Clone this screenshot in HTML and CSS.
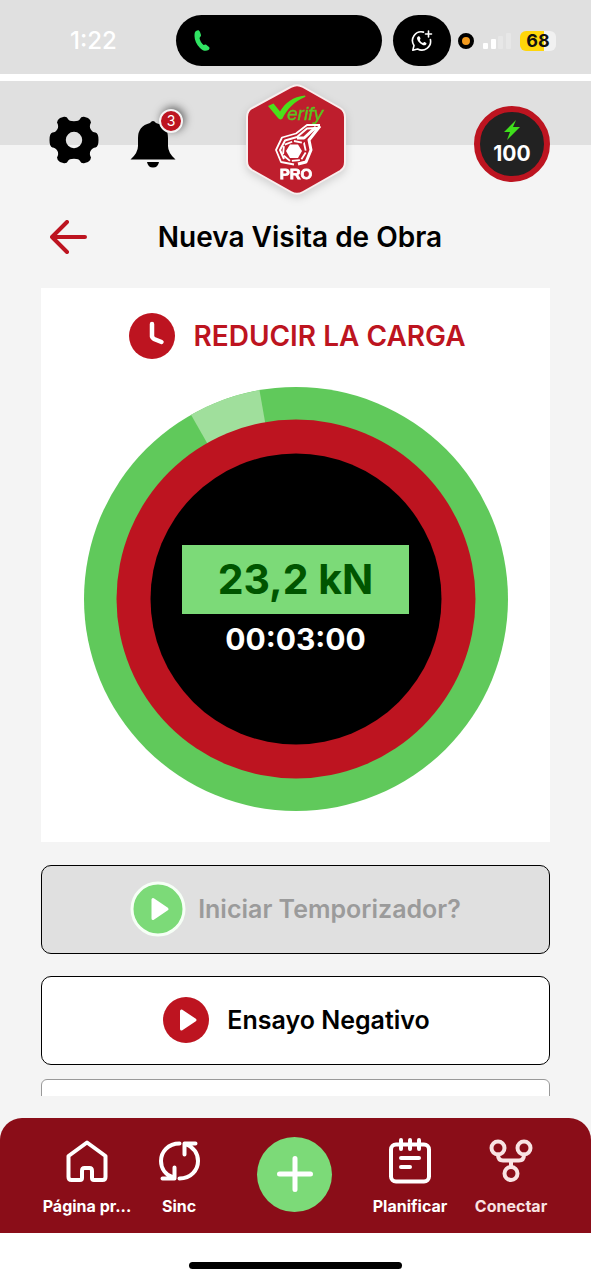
FILE: index.html
```html
<!DOCTYPE html>
<html lang="es">
<head>
<meta charset="utf-8">
<meta name="viewport" content="width=device-width, initial-scale=1">
<title>Nueva Visita de Obra</title>
<link rel="stylesheet" href="styles.css">
</head>
<body>
<div class="status">
  <span class="status-time">1:22</span>
  <span class="island">
    <svg width="16" height="22" viewBox="0 0 16 22" fill="#30e463"><path d="M2 1C4 0 5 0 6 2L7 5C7.300 6 6 7 5.500 8C6 11 7.500 13 9.500 15C10.500 15 11.500 14 12.500 15L15 17C16 18 15.500 19 14.500 20C12 21.500 9 21 6 18C2.500 14.500 .5 10 .5 6C.5 3.500 .8 1.800 2 1Z"/></svg>
  </span>
  <span class="call-pill">
    <svg width="22" height="22" viewBox="0 0 22 22" fill="none" stroke="#fff" stroke-width="1.600" stroke-linecap="round" stroke-linejoin="round"><path d="M12.500 2.100A8.800 8.800 0 0 0 3 15.500L1.800 20.200L6.600 19A8.800 8.800 0 0 0 19.400 9.500"/><path d="M17.500 1V7M14.500 4H20.500"/><path d="M7 6.500C8 5.800 8.600 6.200 9 7.200L9.500 8.500C9.600 9 9 9.500 8.800 10C9.500 11.500 10.500 12.500 12 13C12.700 12.600 13 11.900 13.600 12.100L15.300 13C15.800 13.500 15.200 14.800 14.200 15.200C11 16 6 11 6 8.200C6 7.500 6.400 6.900 7 6.500Z" fill="#fff" stroke="none"/></svg>
  </span>
  <span class="mic-dot"></span>
  <svg class="signal" width="28" height="18" viewBox="0 0 28 18"><rect y="11" width="5" height="6" rx="1" fill="#fff"/><rect x="8" y="7" width="5" height="10" rx="1" fill="#fff"/><rect x="15" y="4" width="5" height="13" rx="1" fill="#e7e7e7"/><rect x="23" y="1" width="5" height="16" rx="1" fill="#e7e7e7"/></svg>
  <span class="battery">68</span>
</div>

<header class="header">
  <div class="header-actions">
    <button class="icon-button" aria-label="Ajustes">
      <svg width="50" height="48" viewBox="0 0 50 48"><path fill="#000" fill-rule="evenodd" d="M11 2L15 .8Q18 .5 19 3Q20 5.200 25 5.200Q30 5.200 31 3Q32 .5 35 .8L39 2Q42 4 42 6.500Q40 10 41.500 13Q43.500 16.500 46.500 16.500Q49.500 17 49.500 24Q49.500 31 46.500 31.500Q43.500 31.500 41.500 35Q40 38 42 41.500Q42 44 39 46L35 47.200Q32 47.500 31 45Q30 42.800 25 42.800Q20 42.800 19 45Q18 47.500 15 47.200L11 46Q8 44 8 41.500Q10 38 8.500 35Q6.500 31.500 3.500 31.500Q.5 31 .5 24Q.5 17 3.500 16.500Q6.500 16.500 8.500 13Q10 10 8 6.500Q8 4 11 2ZM25 15.800A8.200 8.200 0 1 0 25 32.200A8.200 8.200 0 1 0 25 15.800Z"/></svg>
    </button>
    <button class="icon-button bell" aria-label="Notificaciones">
      <svg width="46" height="48" viewBox="0 0 46 48" fill="#000"><path d="M20 3Q23-1 26 3Q38 6 38 18V26Q38 33 45.500 39.500H.5Q8 33 8 26V18Q8 6 20 3ZM17 42H29Q28 47.500 23 47.500Q18 47.500 17 42Z"/></svg>
      <span class="badge">3</span>
    </button>
  </div>
  <svg class="logo" width="102" height="114" viewBox="9 8 102 114" role="img" aria-label="Verify PRO">
    <path d="M55 12Q61 8.500 67 12L104 33Q109 36 109 42V87Q109 93 104 96L67 117Q61 120.500 55 117L16 95Q11 92 11 86V42Q11 36 16 33Z" fill="#be1e2d" stroke="#f8eeee" stroke-width="2"/>
    <path d="M32 31L37.500 28.500L44 36.500C49 28 57 21.500 69 20.500Q70 21 69 22C59 26 51 34 46.500 43.500Q44 45.500 42 43Z" fill="#4be01a"/>
    <text x="51" y="45" class="logo-verify">erify</text>
    <g fill="none" stroke="#fff" stroke-linejoin="round">
      <path stroke-width="1.800" d="M84 50L71 50L60 58.500L46 62.500L40 75L45 87L58 89.500"/>
      <path stroke-width="2" d="M81 53L71 53.500L61 62L49 65.500L44 75L48 84"/>
      <path stroke-width="3" d="M84 51L73 65L75 75L70 87L62 89M80 52L68 63L61 63"/>
      <path stroke-width="1.800" stroke-dasharray="8 2" d="M58 66L68 68L70 77L65 85L54 86L47 80L48 70Z"/>
    </g>
    <path d="M54 69.500L62 69.500L66 76L62 83L54 83L50 76Z" fill="#fff"/>
    <text x="60" y="104" text-anchor="middle" class="logo-pro">PRO</text>
  </svg>
  <div class="charge">
    <svg width="16" height="20" viewBox="0 0 16 20"><path d="M12 0L0 12H6L3 20L16 7H9Z" fill="#3fe01c"/></svg>
    <span>100</span>
  </div>
</header>

<div class="title-row">
  <button class="icon-button back" aria-label="Volver">
    <svg width="38" height="34" viewBox="0 0 38 34" fill="none" stroke="#bd1420" stroke-width="4" stroke-linecap="round" stroke-linejoin="round"><path d="M17 2L2 17L17 32M2 17H35"/></svg>
  </button>
  <h1>Nueva Visita de Obra</h1>
</div>

<main class="content">
  <section class="card">
    <div class="card-head">
      <svg width="46" height="46" viewBox="0 0 46 46"><circle cx="23" cy="23" r="23" fill="#bd1420"/><path d="M23 11V23.500Q23.500 25 25 26L32.500 29" fill="none" stroke="#fff" stroke-width="4.500" stroke-linecap="round" stroke-linejoin="round"/></svg>
      <h2>REDUCIR LA CARGA</h2>
    </div>
    <div class="gauge">
      <svg class="gauge-rings" viewBox="-212 -212 424 424">
        <circle r="212" fill="#60c95b"/>
        <path d="M0 0L-105 -184.200A212 212 0 0 1 -36.500 -208.800Z" fill="#a0df9c"/>
        <circle r="179.500" fill="#bd1420"/>
        <circle r="145.500" fill="#000"/>
      </svg>
      <div class="readout">
        <div class="force">23,2 kN</div>
        <div class="timer">00:03:00</div>
      </div>
    </div>
  </section>

  <button class="action" disabled>
    <svg width="56" height="56" viewBox="0 0 56 56"><circle cx="28" cy="28" r="26" fill="#7cda78" stroke="#f6fff6" stroke-width="3"/><path d="M23 18.500V37.500L37 28Z" fill="#fff" stroke="#fff" stroke-width="3" stroke-linejoin="round"/></svg>
    <span>Iniciar Temporizador?</span>
  </button>
  <button class="action action-negative">
    <svg width="46" height="46" viewBox="0 0 46 46"><circle cx="23" cy="23" r="23" fill="#bd1420"/><path d="M18.500 14V32L32 23Z" fill="#fff" stroke="#fff" stroke-width="3" stroke-linejoin="round"/></svg>
    <span>Ensayo Negativo</span>
  </button>
  <div class="next-panel"></div>
</main>

<nav class="tabs">
  <a class="tab" href="#">
    <svg width="46" height="46" viewBox="0 0 46 46"><path d="M23 4.500L41.500 18V39Q41.500 42 38.500 42H30Q28 42 28 40V33Q28 30 25.500 30H20.500Q18 30 18 33V40Q18 42 16 42H7.500Q4.500 42 4.500 39V18Z"/></svg>
    <span>Página pr...</span>
  </a>
  <a class="tab" href="#">
    <svg width="46" height="46" viewBox="0 0 46 46"><path d="M23.500 5.500C12 5.500 5 14 5 23C5 31 10 37 17 39.500M6.500 40.500H18.500V29.500M23.500 40.500C35 40.500 42 32 42 23C42 15 37 9 29 5.500M39.500 5.500H28.500V16.500"/></svg>
    <span>Sinc</span>
  </a>
  <button class="add" aria-label="Añadir">
    <svg width="36" height="36" viewBox="0 0 36 36" stroke="#fff" stroke-width="5" stroke-linecap="round"><path d="M18 2.500V33.500M2.500 18H33.500"/></svg>
  </button>
  <a class="tab" href="#">
    <svg width="46" height="46" viewBox="0 0 46 46"><rect x="4" y="6.500" width="38" height="37" rx="5"/><path d="M14 2V11M23 2V11M32 2V11M14 20H32M14 29H23"/></svg>
    <span>Planificar</span>
  </a>
  <a class="tab tab-connect" href="#">
    <svg width="46" height="46" viewBox="0 0 46 46"><circle cx="10" cy="10" r="6.500"/><circle cx="36" cy="10" r="6.500"/><circle cx="23" cy="35.500" r="6.500"/><path d="M10 16.500Q10 22.500 15 22.500H31Q36 22.500 36 16.500M23 22.500V28.500"/></svg>
    <span>Conectar</span>
  </a>
</nav>
<div class="home-area"><span class="home-indicator"></span></div>
</body>
</html>
```
FILE: styles.css
```css
* { box-sizing: border-box; }

body {
  margin: 0;
  height: 100vh;
  display: flex;
  flex-direction: column;
  overflow: hidden;
  background: #f4f4f4;
  color: #000;
  font-family: Inter, "Liberation Sans", sans-serif;
}

button {
  font: inherit;
  color: inherit;
}

svg { display: block; flex: none; }

.status {
  flex: none;
  display: flex;
  align-items: center;
  height: 81px;
  padding: 14px 32px 7px 70px;
  background: #e0e0e0;
  border-bottom: 7px solid #fff;
}

.status-time {
  width: 106px;
  color: #fff;
  font-size: 24px;
  font-weight: 500;
}

.island {
  flex: 1;
  display: flex;
  align-items: center;
  height: 51px;
  padding-left: 18px;
  border-radius: 26px;
  background: #000;
}

.call-pill {
  display: flex;
  align-items: center;
  justify-content: center;
  width: 58px;
  height: 51px;
  margin: 0 7px 0 11px;
  border-radius: 26px;
  background: #000;
}

.mic-dot {
  width: 16px;
  height: 16px;
  border: 4px solid #000;
  border-radius: 50%;
  background: #f39a1d;
}

.signal { margin: 0 9px; }

.battery {
  width: 36px;
  height: 20px;
  margin-right: 3px;
  border-radius: 6px;
  background: linear-gradient(90deg, #ffd60a 68%, #f1f1f1 68%);
  color: #111;
  font-size: 18px;
  font-weight: 700;
  line-height: 20px;
  text-align: center;
}

.header {
  flex: none;
  display: grid;
  grid-template-columns: 1fr auto 1fr;
  align-items: center;
  padding: 2px 41px 5px;
  background: linear-gradient(#e0e0e0, #e0e0e0) 0 0 / 100% 64px no-repeat;
}

.header-actions {
  display: flex;
  align-items: center;
  gap: 31px;
  padding-left: 8px;
}

.icon-button {
  padding: 0;
  border: 0;
  background: none;
}

.bell {
  position: relative;
  margin-top: 8px;
}

.badge {
  position: absolute;
  top: -11px;
  right: -7px;
  width: 24px;
  height: 24px;
  border: 2px solid #f4f4f4;
  border-radius: 50%;
  background: #bd1420;
  box-shadow: 2px -2px 8px rgba(0, 0, 0, .55);
  color: #fff;
  font-size: 14px;
  line-height: 20px;
  text-align: center;
}

.logo {
  filter: drop-shadow(0 3px 4px rgba(0, 0, 0, .15));
}

.logo-verify {
  fill: #5cc61f;
  stroke: #5cc61f;
  stroke-width: .4;
  font: italic 19px "Liberation Sans", sans-serif;
}

.logo-pro {
  fill: #fff;
  stroke: #fff;
  stroke-width: .8;
  font: bold 15px "Liberation Sans", sans-serif;
}

.charge {
  justify-self: end;
  display: flex;
  flex-direction: column;
  align-items: center;
  width: 76px;
  height: 76px;
  margin-top: 8px;
  padding-top: 8px;
  border: 6px solid #bd1420;
  border-radius: 50%;
  background: #222;
  color: #fff;
  font-size: 21px;
  font-weight: 700;
  line-height: 28px;
}

.title-row {
  flex: none;
  display: flex;
  align-items: center;
  height: 86px;
  padding: 0 41px 16px 50px;
}

h1, h2 {
  margin: 0;
  font-size: 28px;
  font-weight: 600;
  line-height: 36px;
}

h1 {
  flex: 1;
  padding-right: 38px;
  text-align: center;
}

.content {
  flex: 1;
  min-height: 0;
  display: flex;
  flex-direction: column;
  overflow: hidden;
  margin: 0 41px 22px;
}

.card {
  flex: none;
  padding: 25px 24px 31px;
  margin-bottom: 23px;
  background: #fff;
}

.card-head {
  display: flex;
  align-items: center;
  justify-content: center;
  gap: 18px;
  margin-bottom: 28px;
  padding-left: 4px;
}

h2 { color: #bd1420; }

.gauge {
  display: grid;
  place-items: center;
  max-width: 424px;
  margin: 0 auto;
}

.gauge-rings, .readout { grid-area: 1 / 1; }

.gauge-rings { width: 100%; }

.readout {
  display: flex;
  flex-direction: column;
  align-items: center;
  gap: 7px;
  padding-top: 4px;
  font-weight: 700;
}

.force {
  padding: 8px 36px 9px;
  background: #7cda78;
  color: #005500;
  font-size: 41px;
  line-height: 52px;
}

.timer {
  color: #fff;
  font-size: 30px;
  line-height: 36px;
}

.action {
  flex: none;
  display: flex;
  align-items: center;
  justify-content: center;
  gap: 18px;
  height: 89px;
  margin-bottom: 22px;
  padding: 0 0 2px 2px;
  border: 1px solid #000;
  border-radius: 10px;
  background: #fff;
  font-size: 25px;
  font-weight: 600;
}

.action:disabled {
  gap: 12px;
  padding-left: 0;
  background: #e0e0e0;
  color: #9b9b9b;
}

.action-negative { margin-bottom: 14px; }

.next-panel {
  flex: none;
  height: 89px;
  border: 1px solid #999;
  border-radius: 6px;
  background: #fff;
}

.tabs {
  flex: none;
  display: grid;
  grid-template-columns: 92fr 92fr 139fr 92fr 110fr;
  align-items: center;
  justify-items: center;
  height: 115px;
  padding: 0 25px 3px 41px;
  border-radius: 22px 22px 0 0;
  background: #8a0d18;
}

.tab {
  display: flex;
  flex-direction: column;
  align-items: center;
  gap: 10px;
  padding-top: 8px;
  color: #fff;
  font-size: 16px;
  font-weight: 700;
  line-height: 24px;
  text-decoration: none;
  white-space: nowrap;
}

.tab svg {
  fill: none;
  stroke: currentColor;
  stroke-width: 4;
  stroke-linecap: round;
  stroke-linejoin: round;
}

.tab-connect { color: #f9e3e3; }

.add {
  display: grid;
  place-items: center;
  width: 75px;
  height: 75px;
  padding: 0;
  border: 0;
  border-radius: 50%;
  background: #7cda78;
}

.home-area {
  flex: none;
  display: flex;
  align-items: center;
  justify-content: center;
  height: 47px;
  padding-top: 18px;
  background: #fff;
}

.home-indicator {
  width: 36%;
  height: 7px;
  border-radius: 4px;
  background: #000;
}
```
